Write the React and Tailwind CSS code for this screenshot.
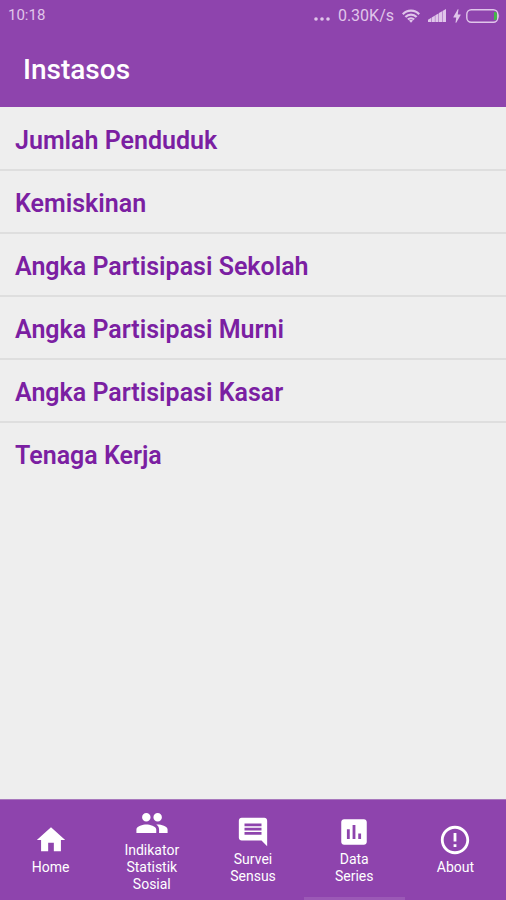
import {
  MdBolt,
  MdComment,
  MdErrorOutline,
  MdHome,
  MdPeople,
  MdPoll,
} from "react-icons/md";

const topics = [
  "Jumlah Penduduk",
  "Kemiskinan",
  "Angka Partisipasi Sekolah",
  "Angka Partisipasi Murni",
  "Angka Partisipasi Kasar",
  "Tenaga Kerja",
];

const tabs = [
  { id: "home", lines: ["Home"], icon: MdHome },
  { id: "indikator", lines: ["Indikator", "Statistik", "Sosial"], icon: MdPeople },
  { id: "survei", lines: ["Survei", "Sensus"], icon: MdComment },
  { id: "data", lines: ["Data", "Series"], icon: MdPoll, active: true },
  { id: "about", lines: ["About"], icon: MdErrorOutline },
];

function WifiIcon() {
  return (
    <svg viewBox="0 0 18 14" className="h-3.5 w-[18px]" fill="none" stroke="currentColor" strokeWidth="2.2">
      <path d="M0.8 5.2C5.2 0.5 12.8 0.5 17.2 5.2" />
      <path d="M3.4 8C6.5 4.8 11.5 4.8 14.6 8" />
      <path d="M5.9 10.6C7.6 8.8 10.4 8.8 12.1 10.6" />
      <path d="M7 11.4L9 13.8L11 11.4Q9 10 7 11.4Z" fill="currentColor" stroke="none" />
    </svg>
  );
}

function SignalIcon() {
  return (
    <svg viewBox="0 0 18 13" className="h-[13px] w-[18px]" fill="currentColor">
      <path d="M0 13V10.8L3.3 8.8V13Z" />
      <path d="M3.7 13V8.5L6.9 6.6V13Z" />
      <path d="M7.3 13V6.3L10.5 4.4V13Z" />
      <path d="M10.9 13V4.1L14.1 2.2V13Z" />
      <path d="M14.5 13V2L18 0V13Z" />
    </svg>
  );
}

function BatteryIcon() {
  return (
    <svg viewBox="0 0 34 14" className="h-3.5 w-[34px]">
      <rect x="0.8" y="0.8" width="31" height="12.4" rx="4.5" fill="none" stroke="currentColor" strokeWidth="1.4" />
      <path d="M32.4 4.5Q34 7 32.4 9.5Z" fill="currentColor" />
      <path d="M28 3H29Q31 3 31 5V9Q31 11 29 11H28Z" fill="#43b649" />
    </svg>
  );
}

function StatusBar() {
  return (
    <div className="flex h-[30px] items-center justify-between pt-px pr-1.5 pl-2 text-[#e0c6ea]">
      <span className="text-[15px]">10:18</span>
      <div className="flex items-center">
        <svg viewBox="0 0 16 4" className="mt-1.5 mr-2 h-1 w-4" fill="currentColor">
          <circle cx="2" cy="2" r="1.8" />
          <circle cx="8" cy="2" r="1.8" />
          <circle cx="14" cy="2" r="1.8" />
        </svg>
        <span className="mr-2 text-base">0.30K/s</span>
        <WifiIcon />
        <span className="w-2" />
        <SignalIcon />
        <MdBolt className="ml-0.5 h-[18px] w-[18px]" />
        <BatteryIcon />
      </div>
    </div>
  );
}

function TabBar() {
  return (
    <nav className="flex h-[101px] border-t border-[#a878bd] bg-[#8e44ad]">
      {tabs.map(({ id, lines, icon: Icon, active }) => (
        <button
          key={id}
          type="button"
          className={`flex flex-1 flex-col items-center justify-center border-b-[3px] pt-0.5 text-sm leading-[17px] text-white ${
            active ? "border-[#9b59b6]" : "border-transparent"
          }`}
        >
          <Icon className="mb-0.5 h-[34px] w-[34px] shrink-0" />
          {lines.map((line) => (
            <span key={line}>{line}</span>
          ))}
        </button>
      ))}
    </nav>
  );
}

export default function App() {
  return (
    <div className="flex min-h-screen flex-col bg-[#eeeeee] font-['Roboto',sans-serif]">
      <header className="bg-[#8e44ad]">
        <StatusBar />
        <h1 className="flex h-[77px] items-center px-[23px] pt-0.5 text-[28px] font-medium text-white">
          Instasos
        </h1>
      </header>

      <main className="flex-1 pt-px">
        <ul className="divide-y-2 divide-[#dedede]">
          {topics.map((topic) => (
            <li key={topic}>
              <a
                href="#"
                className="block px-[15px] pt-[17px] pb-3 text-[25px] leading-8 font-semibold text-[#7b1fa2]"
              >
                {topic}
              </a>
            </li>
          ))}
        </ul>
      </main>

      <TabBar />
    </div>
  );
}
